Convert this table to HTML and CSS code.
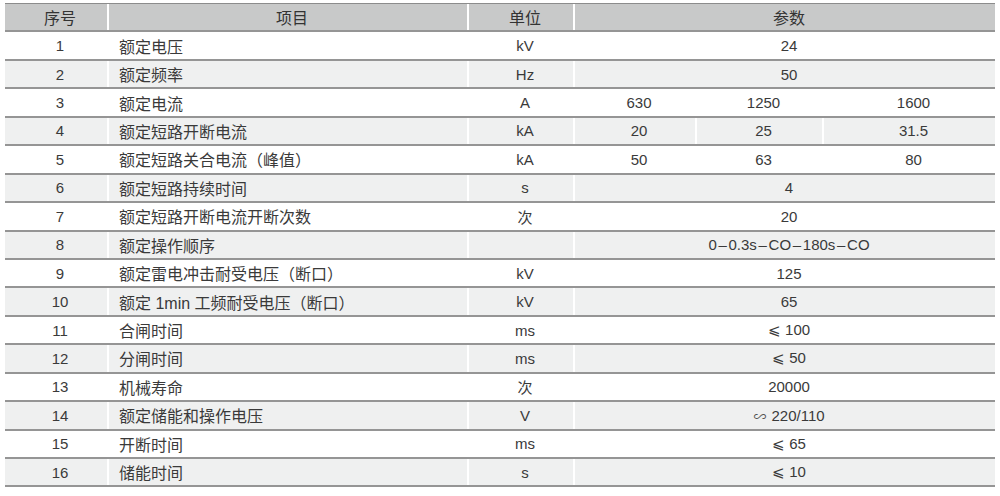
FILE: index.html
```html
<!DOCTYPE html>
<html lang="zh">
<head>
<meta charset="utf-8">
<title>参数表</title>
<link rel="stylesheet" href="styles.css">
</head>
<body>
<div class="table">
  <div class="row head">
    <div class="c no">序号</div><div class="c hitem">项目</div><div class="c unit">单位</div><div class="c span3">参数</div>
  </div>
  <div class="row">
    <div class="c no">1</div><div class="c item">额定电压</div><div class="c unit">kV</div><div class="c span3">24</div>
  </div>
  <div class="row alt">
    <div class="c no">2</div><div class="c item">额定频率</div><div class="c unit">Hz</div><div class="c span3">50</div>
  </div>
  <div class="row">
    <div class="c no">3</div><div class="c item">额定电流</div><div class="c unit">A</div><div class="c">630</div><div class="c">1250</div><div class="c">1600</div>
  </div>
  <div class="row alt">
    <div class="c no">4</div><div class="c item">额定短路开断电流</div><div class="c unit">kA</div><div class="c">20</div><div class="c">25</div><div class="c">31.5</div>
  </div>
  <div class="row">
    <div class="c no">5</div><div class="c item">额定短路关合电流（峰值）</div><div class="c unit">kA</div><div class="c">50</div><div class="c">63</div><div class="c">80</div>
  </div>
  <div class="row alt">
    <div class="c no">6</div><div class="c item">额定短路持续时间</div><div class="c unit">s</div><div class="c span3">4</div>
  </div>
  <div class="row">
    <div class="c no">7</div><div class="c item">额定短路开断电流开断次数</div><div class="c unit">次</div><div class="c span3">20</div>
  </div>
  <div class="row alt">
    <div class="c no">8</div><div class="c item">额定操作顺序</div><div class="c unit"></div><div class="c span3">0<span class="dash">–</span>0.3s<span class="dash">–</span>CO<span class="dash">–</span>180s<span class="dash">–</span>CO</div>
  </div>
  <div class="row">
    <div class="c no">9</div><div class="c item">额定雷电冲击耐受电压（断口）</div><div class="c unit">kV</div><div class="c span3">125</div>
  </div>
  <div class="row alt">
    <div class="c no">10</div><div class="c item">额定 1min 工频耐受电压（断口）</div><div class="c unit">kV</div><div class="c span3">65</div>
  </div>
  <div class="row">
    <div class="c no">11</div><div class="c item">合闸时间</div><div class="c unit">ms</div><div class="c span3">⩽ 100</div>
  </div>
  <div class="row alt">
    <div class="c no">12</div><div class="c item">分闸时间</div><div class="c unit">ms</div><div class="c span3">⩽ 50</div>
  </div>
  <div class="row">
    <div class="c no">13</div><div class="c item">机械寿命</div><div class="c unit">次</div><div class="c span3">20000</div>
  </div>
  <div class="row alt">
    <div class="c no">14</div><div class="c item">额定储能和操作电压</div><div class="c unit">V</div><div class="c span3"><span class="sym">∽</span>220/110</div>
  </div>
  <div class="row">
    <div class="c no">15</div><div class="c item">开断时间</div><div class="c unit">ms</div><div class="c span3">⩽ 65</div>
  </div>
  <div class="row alt">
    <div class="c no">16</div><div class="c item">储能时间</div><div class="c unit">s</div><div class="c span3">⩽ 10</div>
  </div>
</div>
</body>
</html>
```

FILE: styles.css
```css
html, body {
  margin: 0;
  background: #ffffff;
}
body {
  padding: 3px 0 0 5px;
  font-family: "Liberation Sans", "Noto Sans CJK SC", sans-serif;
  color: #3a3a3a;
}
.table {
  width: 990px;
  border-top: 1px solid #8c8c8c;
}
.row {
  display: grid;
  grid-template-columns: 102px 360px 106px 122px 127px 173px;
  height: 28.45px;
  box-sizing: border-box;
  border-bottom: 2px solid #959595;
  background: #ffffff;
}
.row.alt {
  background: #eff0f0;
}
.row.head {
  background: #c8c9c9;
}
.c {
  display: flex;
  align-items: center;
  justify-content: center;
  box-sizing: border-box;
  padding-left: 8px;
  font-size: 15px;
  border-left: 2px solid #ffffff;
  white-space: nowrap;
}
.c.no {
  border-left: none;
}
.span3 {
  grid-column: span 3;
}
.item {
  justify-content: flex-start;
  padding-left: 10px;
  font-size: 16px;
}
.head .c {
  font-size: 16px;
  color: #333333;
}
.dash {
  padding: 0 1.7px;
}
.sym {
  font-family: "Noto Sans CJK SC", sans-serif;
  font-size: 13px;
  margin-right: 5px;
  color: #555555;
}
```
